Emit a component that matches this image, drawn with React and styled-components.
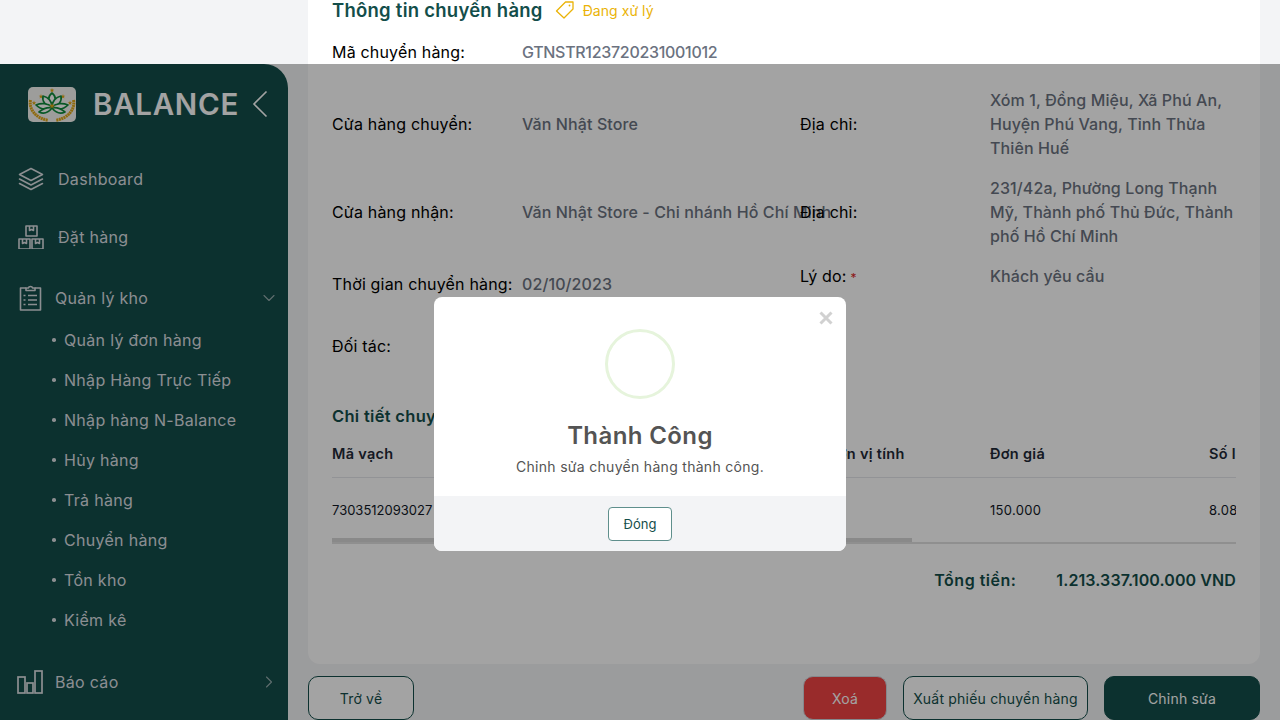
import React from "react";
import styled, { createGlobalStyle } from "styled-components";

const Global = createGlobalStyle`
  html, body { margin: 0; padding: 0; background: #f3f4f6; }
  body { font-family: Inter, "Noto Sans", "Liberation Sans", sans-serif; }
  * { box-sizing: border-box; }
`;

const Page = styled.div`
  position: relative;
  width: 1280px;
  height: 720px;
  overflow: hidden;
  display: flex;
  background: #f3f4f6;
`;

const Sidebar = styled.aside`
  width: 288px;
  flex: none;
  margin-top: 64px;
  background: #134e4a;
  border-top-right-radius: 24px;
  color: #dcdfe3;
  display: flex;
  flex-direction: column;
`;

const Brand = styled.div`
  height: 80px;
  padding: 0 20px 0 28px;
  display: flex;
  align-items: center;
  margin-bottom: 6px;
`;

const BrandName = styled.div`
  margin-left: 17px;
  flex: 1;
  color: #fff;
  font-size: 29.5px;
  font-weight: 600;
  letter-spacing: 0.7px;
  white-space: nowrap;
`;

const NavRow = styled.div`
  height: ${(p) => p.$h || 58}px;
  padding-left: ${(p) => p.$pl || 18}px;
  padding-right: 13px;
  display: flex;
  align-items: center;
  gap: ${(p) => p.$gap || 14}px;
  font-size: 16px;
  letter-spacing: 0.3px;
  margin-top: ${(p) => p.$mt || 0}px;
`;

const NavLabel = styled.span`
  flex: 1;
`;

const SubList = styled.ul`
  list-style: none;
  margin: -6px 0 0;
  padding: 0;
`;

const SubItem = styled.li`
  height: 40px;
  padding-left: 52px;
  display: flex;
  align-items: center;
  gap: 8.5px;
  font-size: 16px;
  letter-spacing: 0.3px;
  &::before {
    content: "";
    width: 3.5px;
    height: 3.5px;
    border-radius: 50%;
    background: #dcdfe3;
  }
`;

const Main = styled.main`
  flex: 1;
  min-width: 0;
  height: 720px;
  padding: 0 20px;
  display: flex;
  flex-direction: column;
`;

const Card = styled.section`
  flex: 1;
  min-height: 0;
  background: #fff;
  border-radius: 0 0 12px 12px;
  padding: 0 24px;
  overflow: hidden;
`;

const TitleRow = styled.div`
  height: 20px;
  display: flex;
  align-items: center;
`;

const Title = styled.h1`
  margin: 0 12px 0 0;
  font-size: 18.5px;
  font-weight: 600;
  color: #134e4a;
  white-space: nowrap;
  letter-spacing: 0.25px;
`;

const Status = styled.span`
  margin-left: 8px;
  font-size: 14px;
  letter-spacing: 0.05px;
  color: #eab308;
`;

const Form = styled.div`
  display: grid;
  grid-template-columns: 468px 1fr;
  margin-top: 20px;
`;

const Field = styled.div`
  display: flex;
  align-items: ${(p) => (p.$top ? "flex-start" : "center")};
  min-height: ${(p) => p.$h || 24}px;
  margin-bottom: ${(p) => (p.$mb === undefined ? 16 : p.$mb)}px;
  font-size: 16px;
  line-height: 24px;
`;

const Label = styled.div`
  width: 190px;
  flex: none;
  color: #000;
  white-space: nowrap;
  letter-spacing: 0.18px;
`;

const Required = styled.span`
  color: #dc2626;
  font-size: 12px;
  margin-left: 4px;
`;

const Value = styled.div`
  color: #6b7280;
  font-weight: 500;
  letter-spacing: ${(p) => (p.$code ? "-0.3px" : "0.1px")};
  white-space: ${(p) => (p.$wrap ? "normal" : "nowrap")};
`;

const SectionTitle = styled.h2`
  margin: 32px 0 0;
  height: 24px;
  line-height: 24px;
  font-size: 16.5px;
  font-weight: 600;
  letter-spacing: 0.3px;
  color: #134e4a;
`;

const Table = styled.div`
  overflow: hidden;
`;

const TableRow = styled.div`
  display: grid;
  grid-template-columns: 140px 355px 163px 219px 200px;
  width: 1077px;
`;

const HeadCell = styled.div`
  padding: 14px 0 11px;
  line-height: 24px;
  font-size: 14.5px;
  font-weight: 600;
  letter-spacing: 0.3px;
  color: #1f2937;
  white-space: nowrap;
`;

const HeadLine = styled.div`
  height: 1px;
  background: #e5e7eb;
`;

const BodyCell = styled.div`
  padding: 22px 0 18px;
  line-height: 20px;
  font-size: 13px;
  font-weight: 400;
  letter-spacing: ${(p) => (p.$code ? 0 : "0.3px")};
  color: #111827;
  white-space: nowrap;
`;

const ScrollTrack = styled.div`
  height: 6px;
  border-bottom: 2px solid #e0e0e0;
`;

const ScrollThumb = styled.div`
  width: 580px;
  height: 4px;
  background: #d6d6d6;
`;

const Total = styled.div`
  margin-top: 24px;
  display: flex;
  justify-content: flex-end;
  gap: 40px;
  font-size: 16px;
  line-height: 24px;
  font-weight: 600;
  letter-spacing: 0.1px;
  color: #134e4a;
`;

const TotalLabel = styled.span`
  letter-spacing: 0.5px;
`;

const Actions = styled.div`
  height: 44px;
  margin-top: 12px;
  flex: none;
  display: flex;
  align-items: stretch;
  gap: 16px;
`;

const Spacer = styled.div`
  flex: 1;
`;

const Action = styled.button`
  width: ${(p) => p.$w}px;
  padding: 0;
  border-radius: 10px;
  font: inherit;
  font-size: 14px;
  letter-spacing: 0.2px;
  white-space: nowrap;
  border: 1px solid ${(p) => (p.$kind === "danger" ? "#d1d5db" : "#134e4a")};
  background: ${(p) =>
    p.$kind === "danger" ? "#ef4444" : p.$kind === "primary" ? "#134e4a" : "#fff"};
  color: ${(p) => (p.$kind ? "#fff" : "#134e4a")};
`;

const Overlay = styled.div`
  position: absolute;
  inset: 64px 0 0 0;
  background: rgba(0, 0, 0, 0.36);
  display: flex;
  justify-content: center;
  align-items: flex-start;
  padding-top: 233px;
`;

const Modal = styled.div`
  position: relative;
  width: 412px;
  height: 254px;
  background: #fff;
  border-radius: 8px;
  overflow: hidden;
  display: flex;
  flex-direction: column;
  align-items: center;
`;

const Close = styled.button`
  position: absolute;
  top: 14px;
  right: 13px;
  width: 14px;
  height: 14px;
  padding: 0;
  border: 0;
  background: none;
  display: flex;
`;

const Ring = styled.div`
  width: 70px;
  height: 70px;
  margin-top: 32px;
  border: 3px solid #e6f4dc;
  border-radius: 50%;
`;

const ModalTitle = styled.h3`
  margin: 21px 0 0;
  height: 32px;
  line-height: 32px;
  font-size: 24px;
  font-weight: 600;
  letter-spacing: 0.4px;
  color: #545454;
`;

const ModalText = styled.p`
  margin: 5px 0 0;
  height: 20px;
  line-height: 20px;
  font-size: 14px;
  letter-spacing: 0.3px;
  color: #545454;
`;

const ModalFooter = styled.div`
  margin-top: auto;
  width: 100%;
  height: 55px;
  background: #f3f4f6;
  display: flex;
  justify-content: center;
  padding-top: 11px;
`;

const ModalButton = styled.button`
  width: 64px;
  height: 34px;
  padding: 0;
  background: #fff;
  border: 1px solid #5f8f8c;
  border-radius: 4px;
  font: inherit;
  font-size: 13px;
  color: #134e4a;
`;

const line = { fill: "none", stroke: "currentColor", strokeLinejoin: "round", strokeLinecap: "round" };

const Star = ({ x, y, r = 2.4 }) => {
  const pts = [];
  for (let i = 0; i < 10; i++) {
    const rad = i % 2 ? r * 0.42 : r;
    const a = -Math.PI / 2 + (i * Math.PI) / 5;
    pts.push(`${(x + rad * Math.cos(a)).toFixed(2)},${(y + rad * Math.sin(a)).toFixed(2)}`);
  }
  return <polygon points={pts.join(" ")} fill="#e0a818" />;
};

const Logo = () => (
  <svg width="48" height="35" viewBox="0 0 48 35" style={{ flex: "none" }}>
    <rect width="48" height="35" rx="5" fill="#f6f6f2" />
    <path d="M2.5 13C0.5 22 8 31.5 20 33.2" fill="none" stroke="#e0a818" strokeWidth="3" strokeDasharray="2 .5" />
    <path d="M45.5 13C47.5 22 40 31.5 28 33.2" fill="none" stroke="#e0a818" strokeWidth="3" strokeDasharray="2 .5" />
    <Star x={24} y={3.4} />
    <Star x={13} y={9.5} />
    <Star x={35} y={9.5} />
    <Star x={6} y={16} />
    <Star x={42} y={16} />
    <g fill="#fff" stroke="#0f8a3c" strokeWidth="1.7" strokeLinejoin="round">
      <path d="M24 19C19 15 20 9 24 6C28 9 29 15 24 19Z" />
      <path d="M24 20C17 19 14 14 15 9C20 10 24 14 24 20Z" />
      <path d="M24 20C31 19 34 14 33 9C28 10 24 14 24 20Z" />
      <path d="M24 20C18 23 12 22 8 18C13 16 20 16 24 20Z" />
      <path d="M24 20C30 23 36 22 40 18C35 16 28 16 24 20Z" />
      <path d="M24 21C20 26 15 27 11 25C15 22 20 20 24 21Z" />
      <path d="M24 21C28 26 33 27 37 25C33 22 28 20 24 21Z" />
    </g>
    <Star x={24} y={19} r={3} />
  </svg>
);

const LayersIcon = () => (
  <svg width="26" height="24" viewBox="0 0 26 24" style={{ flex: "none" }}>
    <g {...line} strokeWidth="1.6">
      <path d="M13 1.5L24.5 7.5L13 13.5L1.5 7.5Z" />
      <path d="M1.5 12L13 18L24.5 12" />
      <path d="M1.5 16.5L13 22.5L24.5 16.5" />
    </g>
  </svg>
);

const BoxesIcon = () => (
  <svg width="26" height="24" viewBox="0 0 26 24" style={{ flex: "none" }}>
    <g {...line} strokeWidth="1.6" strokeLinecap="butt">
      <rect x="8" y="1" width="11" height="10" />
      <path d="M11.5 1V5.5L13.5 4.5L15.5 5.5V1" />
      <rect x="1" y="14" width="11" height="10" />
      <path d="M4.5 14V18.5L6.5 17.5L8.5 18.5V14" />
      <rect x="14" y="14" width="11" height="10" />
      <path d="M17.5 14V18.5L19.5 17.5L21.5 18.5V14" />
    </g>
  </svg>
);

const ClipboardIcon = () => (
  <svg width="23" height="26" viewBox="0 0 23 26" style={{ flex: "none" }}>
    <g {...line} strokeWidth="1.6" strokeLinecap="butt">
      <path d="M7 3H1.5V25H21.5V3H16" />
      <path d="M7 5.5V3H9.5C9.7 1 13.3 1 13.5 3H16V5.5Z" />
      <path d="M9 10.5H18M9 15H18M9 19.5H18" />
      <path d="M4.5 10.5H6.5M4.5 15H6.5M4.5 19.5H6.5" />
    </g>
  </svg>
);

const BarsIcon = () => (
  <svg width="26" height="24" viewBox="0 0 26 24" style={{ flex: "none" }}>
    <g {...line} strokeWidth="1.7" strokeLinecap="butt" strokeLinejoin="miter">
      <rect x="1" y="7" width="7" height="16" />
      <rect x="10" y="13" width="6" height="10" />
      <rect x="18" y="1" width="7" height="22" />
    </g>
  </svg>
);

const Chevron = ({ d, w = 12, h = 12, s = 1.1 }) => (
  <svg width={w} height={h} viewBox={`0 0 ${w} ${h}`} style={{ flex: "none", opacity: 0.65 }}>
    <path d={d} {...line} strokeWidth={s} />
  </svg>
);

const TagIcon = () => (
  <svg width="20" height="20" viewBox="0 0 20 20" style={{ flex: "none" }}>
    <path d="M1.5 11L10.5 2H18V9L9 18Z" fill="none" stroke="#eab308" strokeWidth="1.3" strokeLinejoin="round" />
    <circle cx="14.5" cy="5.5" r="0.9" fill="#eab308" />
  </svg>
);

const subs = [
  "Quản lý đơn hàng",
  "Nhập Hàng Trực Tiếp",
  "Nhập hàng N-Balance",
  "Hủy hàng",
  "Trả hàng",
  "Chuyển hàng",
  "Tồn kho",
  "Kiểm kê",
];

export default function App() {
  return (
    <Page>
      <Global />
      <Sidebar>
        <Brand>
          <Logo />
          <BrandName>BALANCE</BrandName>
          <svg width="16" height="28" viewBox="0 0 16 28" style={{ flex: "none" }}>
            <path d="M14.5 1.5L2 14L14.5 26.5" fill="none" stroke="#fff" strokeWidth="1.6" />
          </svg>
        </Brand>
        <NavRow>
          <LayersIcon />
          <NavLabel>Dashboard</NavLabel>
        </NavRow>
        <NavRow>
          <BoxesIcon />
          <NavLabel>Đặt hàng</NavLabel>
        </NavRow>
        <NavRow $pl={19} $gap={13} $mt={4} $h={56}>
          <ClipboardIcon />
          <NavLabel>Quản lý kho</NavLabel>
          <Chevron d="M1 3.5L6 8.5L11 3.5" />
        </NavRow>
        <SubList>
          {subs.map((s) => (
            <SubItem key={s}>{s}</SubItem>
          ))}
        </SubList>
        <NavRow $pl={17} $gap={12} $mt={14} $h={56}>
          <BarsIcon />
          <NavLabel>Báo cáo</NavLabel>
          <Chevron d="M3.5 1L8.5 6L3.5 11" />
        </NavRow>
      </Sidebar>

      <Main>
        <Card>
          <TitleRow>
            <Title>Thông tin chuyển hàng</Title>
            <TagIcon />
            <Status>Đang xử lý</Status>
          </TitleRow>
          <Form>
            <Field $mb={24}>
              <Label>Mã chuyển hàng:</Label>
              <Value $code>GTNSTR123720231001012</Value>
            </Field>
            <div />
            <Field $h={72}>
              <Label>Cửa hàng chuyển:</Label>
              <Value>Văn Nhật Store</Value>
            </Field>
            <Field $h={72}>
              <Label>Địa chỉ:</Label>
              <Value $wrap>Xóm 1, Đồng Miệu, Xã Phú An, Huyện Phú Vang, Tỉnh Thừa Thiên Huế</Value>
            </Field>
            <Field $h={72}>
              <Label>Cửa hàng nhận:</Label>
              <Value>Văn Nhật Store - Chi nhánh Hồ Chí Minh</Value>
            </Field>
            <Field $h={72}>
              <Label>Địa chỉ:</Label>
              <Value $wrap>231/42a, Phường Long Thạnh Mỹ, Thành phố Thủ Đức, Thành phố Hồ Chí Minh</Value>
            </Field>
            <Field $h={40}>
              <Label>Thời gian chuyển hàng:</Label>
              <Value>02/10/2023</Value>
            </Field>
            <Field $h={40} $top>
              <Label>
                Lý do:<Required>*</Required>
              </Label>
              <Value>Khách yêu cầu</Value>
            </Field>
            <Field $h={52} $mb={0}>
              <Label>Đối tác:</Label>
            </Field>
            <div />
          </Form>
          <SectionTitle>Chi tiết chuyển hàng</SectionTitle>
          <Table>
            <TableRow>
              <HeadCell>Mã vạch</HeadCell>
              <HeadCell>Tên sản phẩm</HeadCell>
              <HeadCell>Đơn vị tính</HeadCell>
              <HeadCell>Đơn giá</HeadCell>
              <HeadCell>Số lượng</HeadCell>
            </TableRow>
            <HeadLine />
            <TableRow>
              <BodyCell $code>7303512093027</BodyCell>
              <BodyCell />
              <BodyCell />
              <BodyCell>150.000</BodyCell>
              <BodyCell>8.088.914</BodyCell>
            </TableRow>
            <ScrollTrack>
              <ScrollThumb />
            </ScrollTrack>
          </Table>
          <Total>
            <TotalLabel>Tổng tiền:</TotalLabel>
            <span>1.213.337.100.000 VND</span>
          </Total>
        </Card>
        <Actions>
          <Action $w={106}>Trở về</Action>
          <Spacer />
          <Action $w={84} $kind="danger">Xoá</Action>
          <Action $w={185}>Xuất phiếu chuyển hàng</Action>
          <Action $w={156} $kind="primary">Chỉnh sửa</Action>
        </Actions>
      </Main>

      <Overlay>
        <Modal>
          <Close aria-label="Đóng">
            <svg width="14" height="14" viewBox="0 0 14 14">
              <path d="M1.5 1.5L12.5 12.5M12.5 1.5L1.5 12.5" stroke="#d1d1d1" strokeWidth="3" fill="none" />
            </svg>
          </Close>
          <Ring />
          <ModalTitle>Thành Công</ModalTitle>
          <ModalText>Chỉnh sửa chuyển hàng thành công.</ModalText>
          <ModalFooter>
            <ModalButton>Đóng</ModalButton>
          </ModalFooter>
        </Modal>
      </Overlay>
    </Page>
  );
}
